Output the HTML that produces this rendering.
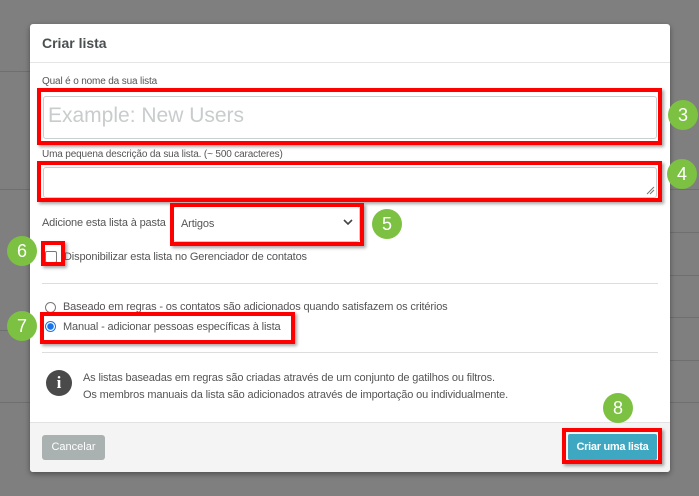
<!DOCTYPE html>
<html><head><meta charset="utf-8"><style>
*{box-sizing:border-box;margin:0;padding:0}
body{width:699px;height:496px;background:#7f7f7f;position:relative;overflow:hidden;font-family:"Liberation Sans",sans-serif;color:#555}
.hl{position:absolute;height:1px;background:#6f6f6f}
.a{position:absolute}
.modal{left:30px;top:24px;width:640px;height:448px;background:#fff;border-radius:3px;box-shadow:0 2px 6px rgba(0,0,0,.4)}
.red{position:absolute;border:4px solid #f00;box-shadow:2px 2px 3px rgba(0,0,0,.35)}
.g{position:absolute;width:30px;height:30px;border-radius:50%;background:#7cc142;color:#fff;font-size:18px;text-align:center;line-height:30px}
.inp{position:absolute;border:1px solid #c9cfcf;border-radius:3px;background:#fff}
.t{position:absolute;font-size:11px;color:#555;white-space:nowrap;letter-spacing:-0.15px}
</style></head><body>
<div class="hl" style="left:0;width:30px;top:71px"></div>
<div class="hl" style="left:0;width:30px;top:189px"></div>
<div class="hl" style="left:0;width:30px;top:330px"></div>
<div class="hl" style="left:0;width:30px;top:402px"></div>
<div class="hl" style="left:670px;width:29px;top:189px"></div>
<div class="hl" style="left:670px;width:29px;top:232px"></div>
<div class="hl" style="left:670px;width:29px;top:275px"></div>
<div class="hl" style="left:670px;width:29px;top:317px"></div>
<div class="hl" style="left:670px;width:29px;top:360px"></div>
<div class="hl" style="left:670px;width:29px;top:402px"></div>
<div class="a modal"></div>
<div class="t" style="left:42px;top:35px;font-size:14px;font-weight:bold;color:#4a5050;letter-spacing:0">Criar lista</div>
<div class="a" style="left:30px;top:62px;width:640px;height:1px;background:#e5e5e5"></div>
<div class="t" style="left:42px;top:76px;font-size:10px">Qual é o nome da sua lista</div>
<div class="inp" style="left:43px;top:96px;width:614px;height:43px"></div>
<div class="t" style="left:48px;top:104px;font-size:21px;color:#c8cccc;letter-spacing:0">Example: New Users</div>
<div class="red" style="left:37px;top:88px;width:625px;height:57px"></div>
<div class="t" style="left:42px;top:149px;font-size:10px">Uma pequena descrição da sua lista. (~ 500 caracteres)</div>
<div class="inp" style="left:43px;top:167px;width:614px;height:31px"></div>
<svg class="a" style="left:646px;top:186px" width="9" height="9"><path d="M1 8L8 1M4 8L8 4" stroke="#777" stroke-width="1"/></svg>
<div class="red" style="left:37px;top:161px;width:625px;height:41px"></div>
<div class="t" style="left:42px;top:217px">Adicione esta lista à pasta</div>
<div class="inp" style="left:173px;top:206px;width:187px;height:36px"></div>
<div class="t" style="left:181px;top:218px">Artigos</div>
<svg class="a" style="left:343px;top:219px" width="10" height="7"><path d="M1 1L5 5L9 1" stroke="#444" stroke-width="1.6" fill="none"/></svg>
<div class="red" style="left:170px;top:203px;width:194px;height:43px"></div>
<div class="a" style="left:45px;top:251px;width:12px;height:12px;border:1px solid #777;border-radius:2px;background:#fff"></div>
<div class="red" style="left:41px;top:241px;width:24px;height:25px"></div>
<div class="t" style="left:64px;top:251px">Disponibilizar esta lista no Gerenciador de contatos</div>
<div class="a" style="left:42px;top:283px;width:616px;height:1px;background:#ddd"></div>
<div class="a" style="left:45px;top:302px;width:11px;height:11px;border:1px solid #777;border-radius:50%"></div>
<div class="t" style="left:63px;top:301px">Baseado em regras - os contatos são adicionados quando satisfazem os critérios</div>
<div class="a" style="left:45px;top:321px;width:11px;height:11px;border:1px solid #1a73e8;border-radius:50%;background:radial-gradient(circle,#1a73e8 3px,#fff 3.5px)"></div>
<div class="t" style="left:63px;top:321px">Manual - adicionar pessoas específicas à lista</div>
<div class="red" style="left:40px;top:312px;width:255px;height:32px"></div>
<div class="a" style="left:42px;top:352px;width:616px;height:1px;background:#ddd"></div>
<div class="a" style="left:46px;top:370px;width:26px;height:26px;border-radius:50%;background:#4a4a4a;color:#fff;font-weight:bold;font-size:17px;text-align:center;line-height:26px;font-family:'Liberation Serif',serif">i</div>
<div class="t" style="left:83px;top:372px">As listas baseadas em regras são criadas através de um conjunto de gatilhos ou filtros.</div>
<div class="t" style="left:83px;top:389px">Os membros manuais da lista são adicionados através de importação ou individualmente.</div>
<div class="a" style="left:30px;top:422px;width:640px;height:50px;background:#f4f4f4;border-top:1px solid #e2e2e2;border-radius:0 0 3px 3px"></div>
<div class="a" style="left:42px;top:435px;width:63px;height:25px;background:#a9b1b1;border-radius:3px;color:#fff;font-size:11px;text-align:center;line-height:25px">Cancelar</div>
<div class="a" style="left:568px;top:434px;width:89px;height:26px;background:#3ea8c2;border-radius:2px;color:#fff;font-size:11px;font-weight:bold;text-align:center;line-height:26px;letter-spacing:-0.3px">Criar uma lista</div>
<div class="red" style="left:562px;top:428px;width:100px;height:36px"></div>
<div class="g" style="left:668px;top:100px">3</div>
<div class="g" style="left:667px;top:159px">4</div>
<div class="g" style="left:372px;top:209px">5</div>
<div class="g" style="left:7px;top:236px">6</div>
<div class="g" style="left:7px;top:311px">7</div>
<div class="g" style="left:603px;top:393px">8</div>
</body></html>
